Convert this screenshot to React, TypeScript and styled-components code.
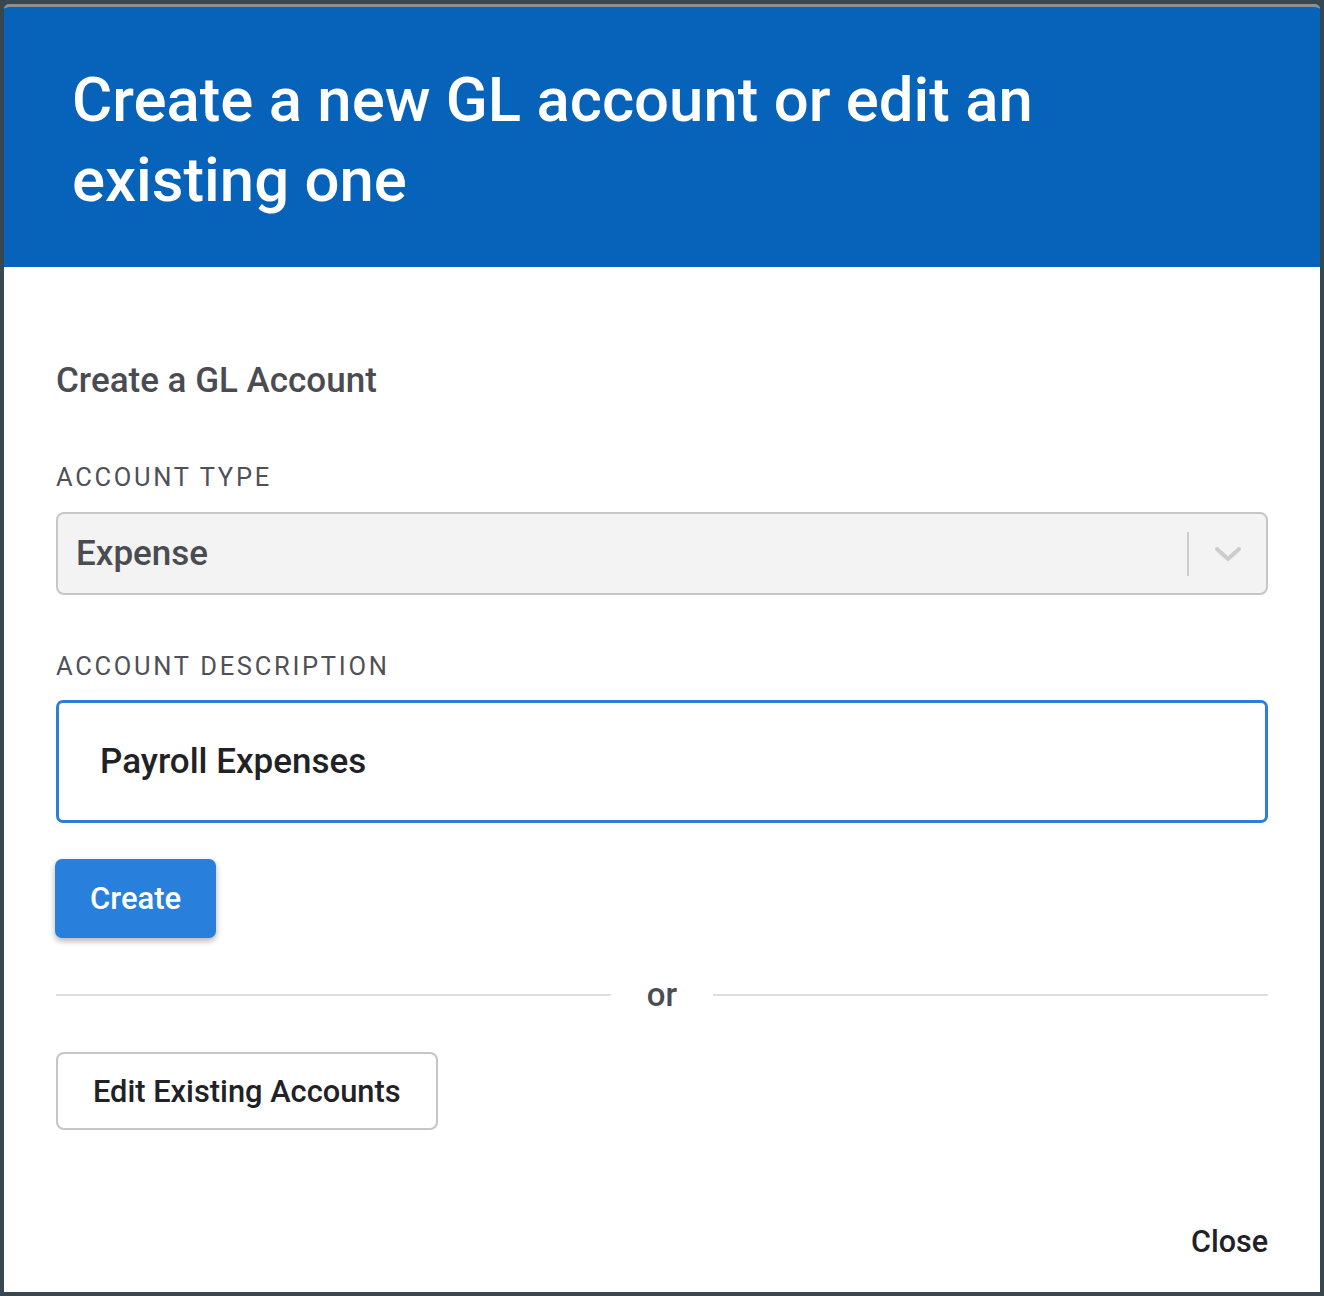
import React from "react";
import styled, { createGlobalStyle } from "styled-components";

const Global = createGlobalStyle`
  html, body { margin: 0; padding: 0; background: #37474f; }
  body { font-family: Roboto, "Noto Sans", "Liberation Sans", sans-serif; }
  * { box-sizing: border-box; }
`;

const Page = styled.div`
  padding: 4px;
  min-height: 1296px;
`;

const Modal = styled.div`
  background: #ffffff;
  border-top: 3px solid #8b9095;
  border-radius: 5px 5px 0 0;
  overflow: hidden;
  height: 1288px;
  display: flex;
  flex-direction: column;
`;

const Header = styled.div`
  background: #0762b9;
  height: 260px;
  padding: 53px 60px 0 68px;
`;

const Title = styled.h1`
  margin: 0;
  color: #ffffff;
  font-size: 61.7px;
  font-weight: 500;
  line-height: 80px;
  max-width: 1010px;
`;

const Body = styled.div`
  flex: 1;
  padding: 94px 52px 0 52px;
  display: flex;
  flex-direction: column;
`;

const SectionTitle = styled.h2`
  margin: 0;
  color: #4b4b52;
  font-size: 35px;
  font-weight: 500;
  line-height: 40px;
`;

const FieldLabel = styled.div<{ $top: number }>`
  margin-top: ${(p) => p.$top}px;
  color: #505057;
  font-size: 25.5px;
  font-weight: 400;
  letter-spacing: 2.7px;
  line-height: 30px;
  text-transform: uppercase;
`;

const SelectBox = styled.div`
  margin-top: 20px;
  height: 83px;
  background: #f3f3f3;
  border: 2px solid #c6c6c6;
  border-radius: 8px;
  display: flex;
  align-items: center;
  padding-left: 18px;
`;

const SelectValue = styled.div`
  flex: 1;
  color: #4b4b52;
  font-size: 35px;
  font-weight: 500;
`;

const Indicator = styled.div`
  display: flex;
  align-items: center;
  height: 100%;
`;

const Separator = styled.span`
  width: 2px;
  height: 44px;
  background: #cccccc;
`;

const Chevron = styled.span`
  width: 77px;
  display: flex;
  justify-content: center;
  align-items: center;
`;

const TextInput = styled.div`
  margin-top: 19px;
  height: 123px;
  border: 3px solid #2d7fd6;
  border-radius: 7px;
  display: flex;
  align-items: center;
  padding-left: 41px;
  color: #222226;
  font-size: 35px;
  font-weight: 500;
`;

const PrimaryButton = styled.button`
  margin-top: 36px;
  margin-left: -1px;
  align-self: flex-start;
  height: 79px;
  padding: 0 35px;
  background: #2880dc;
  color: #ffffff;
  border: none;
  border-radius: 7px;
  box-shadow: 0 3px 6px rgba(0, 0, 0, 0.3);
  font-family: inherit;
  font-size: 31px;
  font-weight: 500;
  cursor: pointer;
`;

const OrRow = styled.div`
  margin-top: 37px;
  display: flex;
  align-items: center;
  gap: 36px;
`;

const Rule = styled.div`
  flex: 1;
  height: 2px;
  background: #dedede;
`;

const OrText = styled.span`
  color: #4b4b52;
  font-size: 33px;
  font-weight: 500;
  line-height: 40px;
`;

const SecondaryButton = styled.button`
  margin-top: 37px;
  align-self: flex-start;
  height: 78px;
  padding: 0 35px;
  background: #ffffff;
  color: #222226;
  border: 2px solid #c6c6c6;
  border-radius: 8px;
  font-family: inherit;
  font-size: 30.8px;
  font-weight: 500;
  cursor: pointer;
`;

const Footer = styled.div`
  margin-top: auto;
  display: flex;
  justify-content: flex-end;
  padding-bottom: 33px;
`;

const CloseButton = styled.button`
  background: none;
  border: none;
  padding: 0;
  color: #222226;
  font-family: inherit;
  font-size: 30.5px;
  font-weight: 500;
  cursor: pointer;
`;

export default function App() {
  return (
    <>
      <Global />
      <Page>
        <Modal>
          <Header>
            <Title>Create a new GL account or edit an existing one</Title>
          </Header>
          <Body>
            <SectionTitle>Create a GL Account</SectionTitle>
            <FieldLabel $top={61}>Account Type</FieldLabel>
            <SelectBox>
              <SelectValue>Expense</SelectValue>
              <Indicator>
                <Separator />
                <Chevron>
                  <svg width="28" height="18" viewBox="0 0 28 18" fill="none">
                    <path d="M3 4l11 10 11-10" stroke="#cccccc" strokeWidth="4" strokeLinecap="round" strokeLinejoin="round" />
                  </svg>
                </Chevron>
              </Indicator>
            </SelectBox>
            <FieldLabel $top={56}>Account Description</FieldLabel>
            <TextInput>Payroll Expenses</TextInput>
            <PrimaryButton>Create</PrimaryButton>
            <OrRow>
              <Rule />
              <OrText>or</OrText>
              <Rule />
            </OrRow>
            <SecondaryButton>Edit Existing Accounts</SecondaryButton>
            <Footer>
              <CloseButton>Close</CloseButton>
            </Footer>
          </Body>
        </Modal>
      </Page>
    </>
  );
}
